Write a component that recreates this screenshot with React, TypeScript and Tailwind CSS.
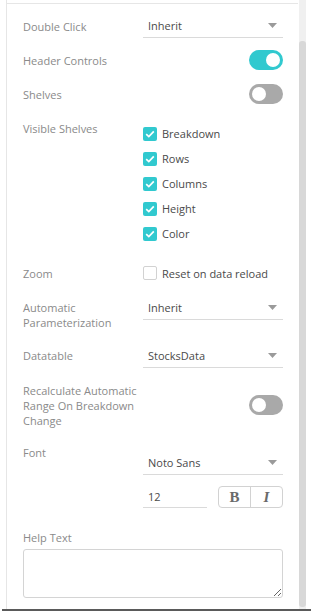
const Caret = () => (
  <svg width="9" height="5" viewBox="0 0 9 5" className="shrink-0">
    <path d="M0 0h9L4.5 5z" fill="#9a9a9a" />
  </svg>
);

const Select = ({ value }: { value: string }) => (
  <div className="flex h-[24px] items-center justify-between border-b border-[#dadada] pl-[5px] pr-[6px] text-[#4a4a4a]">
    <span>{value}</span>
    <Caret />
  </div>
);

const Toggle = ({ on }: { on: boolean }) => (
  <div
    className={
      on
        ? "flex h-[20px] w-[34px] items-center justify-end rounded-full bg-[#31c9cf] px-[3px]"
        : "flex h-[20px] w-[34px] items-center justify-start rounded-full bg-[#a9a9a9] px-[3px]"
    }
  >
    <div className="h-[14px] w-[14px] rounded-full bg-white" />
  </div>
);

const Check = ({ label, checked }: { label: string; checked: boolean }) => (
  <div className="flex items-center">
    {checked ? (
      <div className="flex h-[14px] w-[14px] items-center justify-center rounded-[2px] bg-[#31c9cf]">
        <svg width="10" height="8" viewBox="0 0 10 8">
          <path d="M1.2 4.2l2.6 2.4L8.8 1.4" fill="none" stroke="#fff" strokeWidth="1.7" />
        </svg>
      </div>
    ) : (
      <div className="h-[14px] w-[14px] rounded-[2px] border border-[#d2d2d2] bg-white" />
    )}
    <span className="ml-[5px] text-[#4a4a4a]">{label}</span>
  </div>
);

export default function App() {
  const shelves = ["Breakdown", "Rows", "Columns", "Height", "Color"];

  return (
    <div className="relative h-[614px] w-[311px] overflow-hidden bg-white font-['Open_Sans',sans-serif] text-[11px] leading-[15px]">
      <div className="flex h-[609px]">
        <div className="ml-[6px] flex w-[292px] flex-col border-l border-[#e6e6e6]">
          <div className="mt-[3px] border-t border-[#e6e6e6]" />

          <div className="pl-4 pr-[15px] text-[#8a8a8a]">
            {/* Double Click */}
            <div className="mt-[5px] grid h-[34px] grid-cols-[120px_140px] items-center">
              <span>Double Click</span>
              <Select value="Inherit" />
            </div>

            <div className="grid h-[34px] grid-cols-[120px_140px] items-center">
              <span>Header Controls</span>
              <div className="flex justify-end">
                <Toggle on />
              </div>
            </div>

            <div className="grid h-[34px] grid-cols-[120px_140px] items-center">
              <span>Shelves</span>
              <div className="flex justify-end">
                <Toggle on={false} />
              </div>
            </div>

            <div className="mt-[10px] grid grid-cols-[120px_140px] items-start">
              <span>Visible Shelves</span>
              <div className="flex flex-col">
                {shelves.map((s) => (
                  <div key={s} className="flex h-[25px] items-center">
                    <Check label={s} checked />
                  </div>
                ))}
              </div>
            </div>

            <div className="mt-[10px] grid h-[34px] grid-cols-[120px_140px] items-center">
              <span>Zoom</span>
              <Check label="Reset on data reload" checked={false} />
            </div>

            <div className="mt-[6px] grid grid-cols-[120px_140px] items-start">
              <span className="pt-[4px]">
                Automatic
                <br />
                Parameterization
              </span>
              <Select value="Inherit" />
            </div>

            <div className="mt-[14px] grid grid-cols-[120px_140px] items-start">
              <span className="pt-[4px]">Datatable</span>
              <Select value="StocksData" />
            </div>

            <div className="mt-[15px] grid grid-cols-[120px_140px] items-start">
              <span>
                Recalculate Automatic
                <br />
                Range On Breakdown
                <br />
                Change
              </span>
              <div className="mt-[12px] flex justify-end">
                <Toggle on={false} />
              </div>
            </div>

            <div className="mt-[17px] grid grid-cols-[120px_140px] items-start">
              <span>Font</span>
              <div className="mt-[6px]">
                <Select value="Noto Sans" />
              </div>
            </div>

            <div className="mt-[11px] grid grid-cols-[120px_140px] items-center">
              <span />
              <div className="flex items-center justify-between">
                <div className="flex h-[22px] w-[64px] items-center border-b border-[#dadada] pl-[5px] text-[#4a4a4a]">
                  12
                </div>
                <div className="flex h-[22px] w-[65px] rounded-[4px] border border-[#d2d2d2] font-['Liberation_Serif',serif] text-[15px] text-[#6a6a6a]">
                  <div className="flex flex-1 items-center justify-center border-r border-[#d2d2d2] font-bold">
                    B
                  </div>
                  <div className="flex flex-1 items-center justify-center font-bold italic">I</div>
                </div>
              </div>
            </div>

            <div className="mt-[22px]">Help Text</div>
            <textarea className="mt-[4px] block h-[49px] w-[260px] rounded-[3px] border border-[#d4d4d4] bg-white" />
          </div>
        </div>

        <div className="ml-px w-[7px] bg-[#f0f0f0]">
          <div className="mt-[41px] h-[566px] rounded-[3px] bg-[#d8d8d8]" />
        </div>
      </div>
      <div className="ml-[2px] h-[2px] bg-[#5a5a5a]" />
    </div>
  );
}
